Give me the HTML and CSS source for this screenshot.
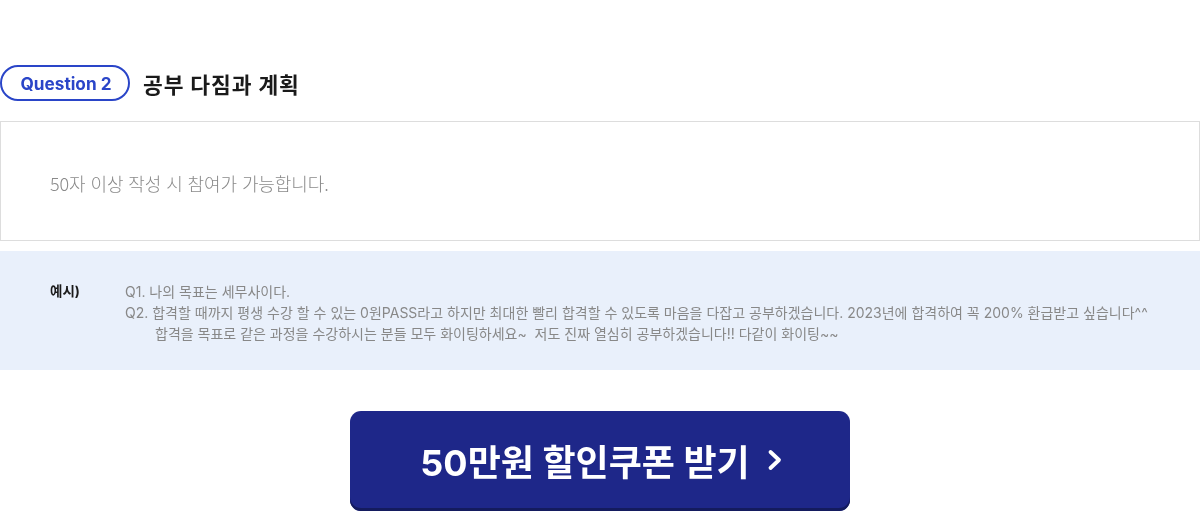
FILE: index.html
```html
<!DOCTYPE html>
<html lang="ko">
<head>
  <meta charset="UTF-8" />
  <title>공부 다짐과 계획</title>
  <link rel="stylesheet" href="styles.css">
</head>
<body>
  <div class="section">
    <div class="question-head">
      <span class="q-badge">Question 2</span>
      <h2>공부 다짐과 계획</h2>
    </div>
    <div class="answer-box">
      <textarea placeholder="50자 이상 작성 시 참여가 가능합니다."></textarea>
    </div>
    <div class="example">
      <div class="ex-label">예시)</div>
      <div class="ex-text">
        <p>Q1. 나의 목표는 세무사이다.</p>
        <p>Q2. 합격할 때까지 평생 수강 할 수 있는 0원PASS라고 하지만 최대한 빨리 합격할 수 있도록 마음을 다잡고 공부하겠습니다. 2023년에 합격하여 꼭 200% 환급받고 싶습니다^^</p>
        <p class="indent">합격을 목표로 같은 과정을 수강하시는 분들 모두 화이팅하세요~&nbsp; 저도 진짜 열심히 공부하겠습니다!! 다같이 화이팅~~</p>
      </div>
    </div>
    <div class="btn-wrap">
      <button class="coupon-btn">50만원 할인쿠폰 받기
        <svg width="18" height="22" viewBox="0 0 18 22"><path d="M4.5 3 L13 11 L4.5 19" fill="none" stroke="#fff" stroke-width="3.8" stroke-linecap="round" stroke-linejoin="round"/></svg>
      </button>
    </div>
  </div>
</body>
</html>
```

FILE: styles.css
```css
body {
  margin: 0;
  padding: 0;
  background-color: #fff;
  font-family: Inter, "Noto Sans CJK KR", sans-serif;
  color: #222;
}

.section {
  width: 1200px;
  padding-top: 65px;
}

.question-head {
  display: flex;
  align-items: center;
  gap: 13px;
  height: 36px;
}

.q-badge {
  display: inline-flex;
  align-items: center;
  justify-content: center;
  box-sizing: border-box;
  width: 130px;
  height: 36px;
  padding-left: 2px;
  border: 2px solid #2a45c8;
  border-radius: 18px;
  color: #2a45c8;
  font-family: Inter, "Noto Sans", sans-serif;
  font-size: 17.2px;
  font-weight: 700;
}

.question-head h2 {
  margin: 0;
  font-family: Inter, "Noto Sans CJK KR", sans-serif;
  font-size: 21.5px;
  font-weight: 700;
  color: #1a1a1a;
  letter-spacing: 0.9px;
}

.answer-box {
  margin-top: 20px;
  height: 120px;
  box-sizing: border-box;
  border: 1px solid #ddd;
}

.answer-box textarea {
  display: block;
  width: 100%;
  height: 100%;
  box-sizing: border-box;
  border: none;
  resize: none;
  outline: none;
  padding: 48px 49px;
  font-family: "Noto Sans CJK KR", sans-serif;
  font-size: 18px;
  font-weight: 300;
  color: #333;
}

.answer-box textarea::placeholder {
  color: #8a8a8a;
  letter-spacing: -0.1px;
}

.example {
  margin-top: 10px;
  height: 119px;
  box-sizing: border-box;
  background-color: #e9f0fb;
  display: flex;
  padding: 30px 0 0 50px;
}

.ex-label {
  width: 75px;
  font-size: 13.5px;
  line-height: 21px;
  font-weight: 700;
  color: #1a1a1a;
}

.ex-text {
  font-family: Inter, "Noto Sans CJK KR", sans-serif;
  font-size: 14px;
  color: #888;
}

.ex-text p {
  margin: 0;
  line-height: 21px;
}

.ex-text .indent {
  padding-left: 30px;
}

.btn-wrap {
  display: flex;
  justify-content: center;
  margin-top: 41px;
}

.coupon-btn {
  display: flex;
  align-items: center;
  justify-content: center;
  gap: 16px;
  width: 500px;
  height: 100px;
  border: none;
  border-radius: 11px;
  background-color: #1e2789;
  box-shadow: inset 0 -3px 0 #141b5e;
  color: #fff;
  font-family: Inter, "Noto Sans CJK KR", sans-serif;
  font-size: 36px;
  font-weight: 700;
  padding: 0 0 2px 4px;
  cursor: pointer;
}
```
